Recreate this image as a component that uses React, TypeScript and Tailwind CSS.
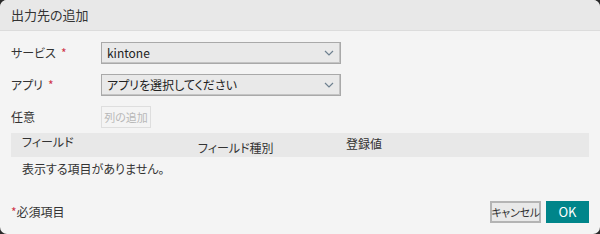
import React from "react";

const FONT = "[font-family:'Noto_Sans_CJK_JP','Noto_Sans',sans-serif] [font-feature-settings:'palt']";

const Chevron: React.FC = () => (
	<svg width="10" height="6" viewBox="0 0 10 6" aria-hidden>
		<polyline points="1,1 5,5 9,1" fill="none" stroke="#6f8190" strokeWidth="1.2" />
	</svg>
);

const Required: React.FC = () => <span className="ml-[5px] text-[#d0364a]">*</span>;

const SelectBox: React.FC<{ value: string }> = ({ value }) => (
	<div className="flex h-[22px] w-[240px] items-center justify-between border border-[#a9a9a9] bg-[#e9e9e9] pl-[5px] pr-[6px] shadow-[inset_-1px_-1px_0_#c4c4c4]">
		<span className="text-[12px] leading-[14px] text-[#222]">{value}</span>
		<Chevron />
	</div>
);

const FormRow: React.FC<{ label: React.ReactNode; children: React.ReactNode }> = ({ label, children }) => (
	<div className="flex h-[22px] items-center">
		<div className="w-[90px] text-[12px] leading-[14px] text-[#333]">{label}</div>
		{children}
	</div>
);

export default function App() {
	return (
		<div className={`h-[234px] w-[600px] bg-[#2a2a2a] ${FONT}`}>
			<div className="flex h-full flex-col overflow-hidden rounded-[7px] bg-[#f4f4f4]">
				{/* Header */}
				<div className="flex h-[31px] shrink-0 items-center border-b border-[#dcdcdc] bg-[#e8e8e8] px-[11px]">
					<span className="text-[13px] text-[#333]">出力先の追加</span>
				</div>

				{/* Body */}
				<div className="flex flex-col px-[11px] pt-[11px]">
					<div className="flex flex-col gap-[10px]">
						<FormRow label={<>サービス<Required /></>}>
							<SelectBox value="kintone" />
						</FormRow>
						<FormRow label={<>アプリ<Required /></>}>
							<SelectBox value="アプリを選択してください" />
						</FormRow>
						<FormRow label="任意">
							<button
								type="button"
								disabled
								className="flex h-[22px] w-[50px] items-center justify-center whitespace-nowrap border border-[#dedede] bg-[#f4f4f4] text-[11px] text-[#b8b8b8]"
							>
								列の追加
							</button>
						</FormRow>
					</div>

					{/* Table */}
					<div className="mt-[5px] grid h-[24px] grid-cols-[176px_148px_1fr] bg-[#e8e8e8] text-[12px] leading-[14px] text-[#333]">
						<div className="pl-[11px] pt-[2px]">フィールド</div>
						<div className="pl-[11px] pt-[8px]">フィールド種別</div>
						<div className="pl-[11px] pt-[4px]">登録値</div>
					</div>
					<div className="flex h-[24px] items-center pl-[11px] text-[12px] leading-[14px] text-[#333]">
						表示する項目がありません。
					</div>
				</div>

				{/* Footer */}
				<div className="mt-auto flex items-center justify-between px-[11px] pb-[11px]">
					<span className="text-[12px] leading-[14px] text-[#333]">
						<span className="text-[#d0364a]">*</span>必須項目
					</span>
					<div className="flex items-center gap-[5px]">
						<button
							type="button"
							className="flex h-[22px] w-[51px] items-center justify-center whitespace-nowrap border-2 border-[#b4b4b4] bg-[#e9e9e9] text-[11px] tracking-[-0.3px] text-[#333]"
						>
							キャンセル
						</button>
						<button
							type="button"
							className="flex h-[22px] w-[43px] items-center justify-center bg-[#00858a] text-[13px] text-white"
						>
							OK
						</button>
					</div>
				</div>
			</div>
		</div>
	);
}
